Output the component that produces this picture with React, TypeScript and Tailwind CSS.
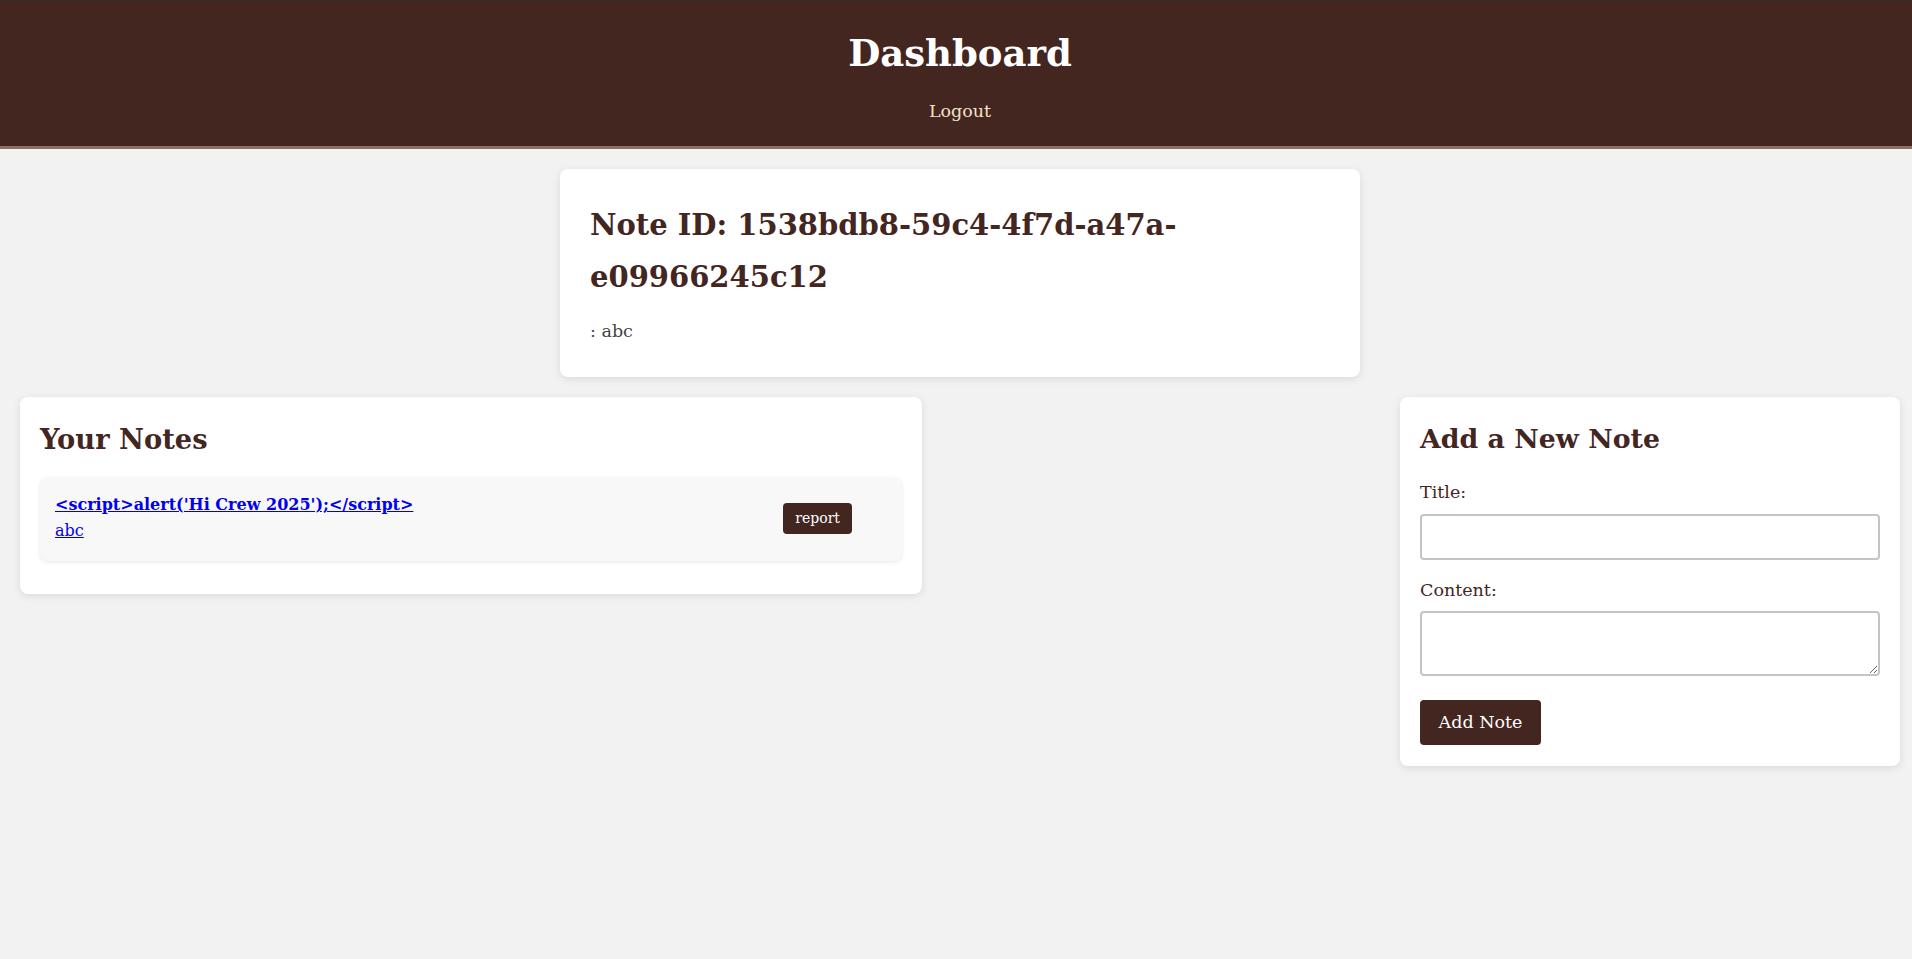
import React from "react";

const serif = "font-['DejaVu_Serif',Georgia,serif]";

function NoteItem() {
  return (
    <div className="flex items-center justify-between rounded-lg bg-[#f8f8f8] pt-[15px] pb-[17px] pl-[15px] pr-[50px] shadow-[0_1px_4px_rgba(0,0,0,0.1)]">
      <div>
        <a href="#" className="block text-[16px] font-bold leading-[24px] text-[#0000ee] underline">
          {"<script>alert('Hi Crew 2025');</script>"}
        </a>
        <a href="#" className="block text-[16px] leading-[27px] text-[#0000ee] underline">
          abc
        </a>
      </div>
      <button className="h-[31px] rounded bg-[#43261f] px-3 text-[14px] text-white">
        report
      </button>
    </div>
  );
}

export default function App() {
  return (
    <div className={`min-h-screen overflow-hidden bg-[#f2f2f2] ${serif}`}>
      <div className="w-[1920px]">
        <header className="border-t border-b-[3px] border-t-[#30302e] border-b-[#8d6e63] bg-[#43261f] pt-[28px] pb-[21px] text-center">
          <h1 className="text-[37px] font-bold leading-[48px] text-white">Dashboard</h1>
          <nav className="mt-5">
            <a href="#" className="text-[17.5px] leading-[28px] text-[#f5e1c8]">
              Logout
            </a>
          </nav>
        </header>

        <main className="px-5">
          <section className="mx-auto mt-5 w-[800px] rounded-lg bg-white px-[30px] pt-[30px] pb-[32px] shadow-[0_2px_8px_rgba(0,0,0,0.1)]">
            <h2 className="text-[29px] font-bold leading-[52px] text-[#43261f]">
              Note ID: 1538bdb8-59c4-4f7d-a47a-e09966245c12
            </h2>
            <p className="mt-[14px] text-[17.5px] leading-[28px] text-[#444]">: abc</p>
          </section>

          <div className="mt-5 flex items-start justify-between">
            <section className="w-[902px] rounded-lg bg-white px-5 pt-5 pb-[33px] shadow-[0_2px_8px_rgba(0,0,0,0.1)]">
              <h2 className="text-[27.3px] font-bold leading-[44px] text-[#43261f]">Your Notes</h2>
              <div className="mt-[17px]">
                <NoteItem />
              </div>
            </section>

            <section className="w-[500px] rounded-lg bg-white px-5 pt-5 pb-[21px] shadow-[0_2px_8px_rgba(0,0,0,0.1)]">
              <h2 className="text-[26.8px] font-bold leading-[44px] text-[#43261f]">Add a New Note</h2>
              <form onSubmit={(e) => e.preventDefault()}>
                <label className="mt-[17px] block text-[17.5px] leading-[28px] text-[#43261f]">Title:</label>
                <input
                  type="text"
                  className="mt-2 block h-[46px] w-full rounded border-2 border-[#c4c4c4] bg-white px-2.5 text-[17.5px] outline-none"
                />
                <label className="mt-4 block text-[17.5px] leading-[28px] text-[#43261f]">Content:</label>
                <textarea className="mt-[7px] block h-[65px] w-full rounded border-2 border-[#c4c4c4] bg-white px-2.5 py-2 text-[17.5px] outline-none" />
                <button
                  type="submit"
                  className="mt-6 h-[45px] w-[121px] rounded bg-[#43261f] text-[17.5px] text-white"
                >
                  Add Note
                </button>
              </form>
            </section>
          </div>
        </main>
      </div>
    </div>
  );
}
